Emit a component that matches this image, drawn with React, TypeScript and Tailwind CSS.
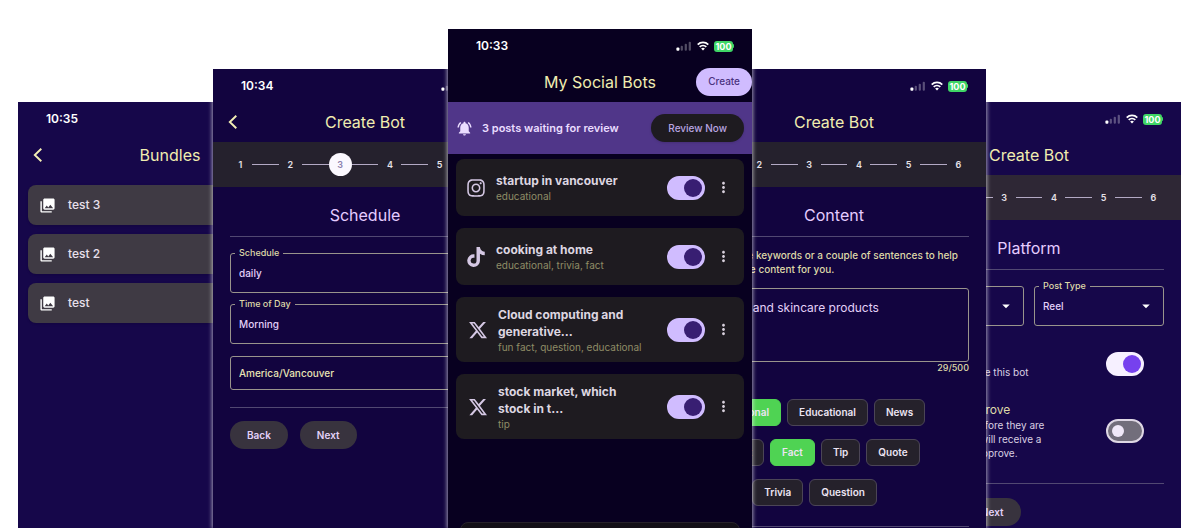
import type { ReactNode } from "react"
import { FaInstagram, FaTiktok, FaXTwitter } from "react-icons/fa6"
import { MdArrowDropDown, MdMoreVert, MdNotificationsActive, MdPhotoLibrary } from "react-icons/md"

function StatusIcons(){
    return(
        <div className="flex items-center gap-[5px]">
            <svg width="16" height="10" viewBox="0 0 16 10">
                <rect x="0.4" y="6.4" width="3" height="3.4" rx="1" fill="#fff"/>
                <rect x="4.7" y="4.8" width="2.2" height="5" rx="1" fill="#fff" opacity=".3"/>
                <rect x="8.7" y="2.8" width="2.2" height="7" rx="1" fill="#fff" opacity=".3"/>
                <rect x="12.7" y="0.8" width="2.2" height="9" rx="1" fill="#fff" opacity=".3"/>
            </svg>
            <svg width="12" height="10" viewBox="0 0 12 10" fill="none" stroke="#fff" strokeWidth="1.8">
                <path d="M0.7 3.6a7.6 7.6 0 0 1 10.6 0"/>
                <path d="M2.7 5.9a4.8 4.8 0 0 1 6.6 0"/>
                <path d="M6 9.6 4.1 7.6a2.8 2.8 0 0 1 3.8 0z" fill="#fff" stroke="none"/>
            </svg>
            <div className="flex items-center">
                <span className="flex h-[11px] w-[19px] items-center justify-center rounded-[3px] bg-[#3fd666] text-[9px] font-bold leading-none text-white">100</span>
                <span className="h-1 w-px rounded-r bg-[#3fd666]"/>
            </div>
        </div>
    )
}

type PhoneProps = {
    time: string
    title: string
    className: string
    back?: boolean
    action?: ReactNode
    children: ReactNode
}

function Phone({ time, title, className, back, action, children }: PhoneProps){
    return(
        <section className={"flex w-[304px] shrink-0 flex-col " + className}>
            <div className="flex h-[34px] shrink-0 items-center justify-between pl-7 pr-[18px]">
                <span className="text-[12px] font-semibold text-white">{time}</span>
                <StatusIcons />
            </div>
            <header className="grid h-[39px] shrink-0 grid-cols-[1fr_auto_1fr] items-center pb-0.5">
                <div className="pl-3">
                    {back && (
                        <button type="button" aria-label="Back" className="block text-[#f3efb4]">
                            <svg width="16" height="16" viewBox="0 0 16 16" fill="none" stroke="currentColor" strokeWidth="1.9">
                                <path d="M11.3 1.7 4.8 8l6.5 6.3"/>
                            </svg>
                        </button>
                    )}
                </div>
                <h1 className="text-[16px] leading-5 text-[#f0edb0]">{title}</h1>
                <div className="justify-self-end">{action}</div>
            </header>
            {children}
        </section>
    )
}

function Stepper({ current, className }: { current?: number, className: string }){
    return(
        <ol className={"flex h-[45px] shrink-0 items-center px-4 text-[9px] font-semibold text-[#e6e1e9] " + className}>
            {[1,2,3,4,5,6].map((step) => (
                <li key={step} className={step > 1 ? "flex flex-1 items-center" : "flex items-center"}>
                    {step > 1 && <span className="h-px flex-1 bg-[#b3a9c4]"/>}
                    <span className={"flex size-[23px] items-center justify-center rounded-full " + (step === current ? "bg-[#fbf8ff] text-[#8c7fae]" : "")}>{step}</span>
                </li>
            ))}
        </ol>
    )
}

function SectionTitle({ children }: { children: ReactNode }){
    return <h2 className="flex h-[50px] shrink-0 items-center justify-center border-b border-[#514872] pt-1.5 text-[16px] text-[#e5ccff]">{children}</h2>
}

function SelectField({ id, label, value, arrow }: { id: string, label: string, value: string, arrow?: boolean }){
    return(
        <fieldset className="min-w-0 flex-1 rounded-[3px] border border-[#99948c] pb-[5px]">
            <legend className="ml-1 px-1 text-[9px] font-medium leading-3 text-[#ded9a8]"><label htmlFor={id}>{label}</label></legend>
            <div className="flex h-7 items-center px-2">
                <select id={id} className="min-w-0 flex-1 appearance-none text-[10px] font-medium text-[#e3d0f8]">
                    <option>{value}</option>
                </select>
                {arrow && <MdArrowDropDown size={18} className="text-white"/>}
            </div>
        </fieldset>
    )
}

function PillButton({ children }: { children: ReactNode }){
    return <button type="button" className="h-7 rounded-full bg-[#38333e] px-[17px] text-[10px] font-semibold text-[#e3d0f8]">{children}</button>
}

function Switch({ label, on, className }: { label: string, on: boolean, className: string }){
    return(
        <input
            type="checkbox"
            role="switch"
            aria-label={label}
            defaultChecked={on}
            className={"flex h-6 w-[38px] shrink-0 appearance-none items-center rounded-full border-2 border-[#ded7e4] bg-[#726e7b] px-1 before:size-3 before:rounded-full before:bg-[#f0e8f8] before:content-[''] checked:justify-end checked:px-px checked:before:size-[18px] " + className}
        />
    )
}

const bots = [
    { icon: <FaInstagram size={20}/>, name: "startup in vancouver", tags: "educational", wide: false },
    { icon: <FaTiktok size={20}/>, name: "cooking at home", tags: "educational, trivia, fact", wide: false },
    { icon: <FaXTwitter size={20}/>, name: "Cloud computing and generative...", tags: "fun fact, question, educational", wide: true },
    { icon: <FaXTwitter size={20}/>, name: "stock market, which stock in t...", tags: "tip", wide: true },
]

const chips = [
    { name: "Promotional", on: true },
    { name: "Educational", on: false },
    { name: "News", on: false },
    { name: "Fun Fact", on: false },
    { name: "Fact", on: true },
    { name: "Tip", on: false },
    { name: "Quote", on: false },
    { name: "Joke", on: false },
    { name: "Trivia", on: false },
    { name: "Question", on: false },
]

function Bundles(){
    return(
        <Phone time="10:35" title="Bundles" back className="mt-[102px] bg-[#16074a]">
            <ul className="flex flex-col gap-[9px] px-[10px] pt-[10px]">
                {["test 3", "test 2", "test"].map((name) => (
                    <li key={name} className="flex h-10 items-center gap-3 rounded-lg bg-[#3f3a44] pl-[11px] text-[12px] font-medium text-[#e8e0ec] shadow">
                        <MdPhotoLibrary size={17} className="text-white"/>
                        {name}
                    </li>
                ))}
            </ul>
        </Phone>
    )
}

function Schedule(){
    return(
        <Phone time="10:34" title="Create Bot" back className="relative z-10 -ml-[109px] mt-[69px] bg-[#12043f] shadow-[0_0_4px_1px_rgba(255,255,255,0.6)]">
            <Stepper current={3} className="bg-[#25212d]"/>
            <div className="flex flex-col px-[17px]">
                <SectionTitle>Schedule</SectionTitle>
                <div className="flex flex-col gap-[5px] pt-[10px]">
                    <SelectField id="schedule" label="Schedule" value="daily"/>
                    <SelectField id="time" label="Time of Day" value="Morning"/>
                </div>
                <input aria-label="Time zone" defaultValue="America/Vancouver" className="mt-3 h-[34px] rounded-[3px] border border-[#99948c] px-2 text-[10px] font-medium text-[#e8e3b4]"/>
                <div className="mt-[17px] flex gap-3 border-t border-[#514872] pt-[13px]">
                    <PillButton>Back</PillButton>
                    <PillButton>Next</PillButton>
                </div>
            </div>
        </Phone>
    )
}

function SocialBots(){
    return(
        <Phone
            time="10:33"
            title="My Social Bots"
            className="relative z-20 -ml-[69px] mt-[29px] bg-[#080020] shadow-[0_0_4px_1px_rgba(255,255,255,0.6)]"
            action={<button type="button" className="h-7 rounded-full bg-[#d0bcff] px-3 text-[10px] font-medium text-[#4a3380]">Create</button>}
        >
            <div className="flex h-[52px] shrink-0 items-center bg-[#503689] px-2 text-[#eaddff]">
                <MdNotificationsActive size={17}/>
                <p className="flex-1 pl-[9px] text-[11px] font-semibold">3 posts waiting for review</p>
                <button type="button" className="h-7 rounded-full bg-[#1e1b20] px-[17px] text-[10px] font-medium text-[#b9a5e0] shadow">Review Now</button>
            </div>
            <ul className="flex flex-col gap-3 px-2 pt-[5px]">
                {bots.map((bot) => (
                    <li key={bot.name} className={"flex items-center gap-[10px] rounded-lg bg-[#1e1b20] pr-3 " + (bot.wide ? "h-[65px] pl-3" : "h-[57px] pl-[10px]")}>
                        <span className="text-[#d5c8e4]">{bot.icon}</span>
                        <div className="min-w-0 flex-1">
                            <h3 className="max-w-[136px] text-[12px] font-bold leading-[17px] text-[#ddd6e0]">{bot.name}</h3>
                            <p className="whitespace-nowrap text-[10px] leading-[14px] text-[#8f8c66]">{bot.tags}</p>
                        </div>
                        <Switch label={bot.name} on className="checked:border-[#d0bcff] checked:bg-[#d0bcff] checked:before:bg-[#381e72]"/>
                        <button type="button" aria-label="More" className="text-[#d8d0dc]"><MdMoreVert size={17}/></button>
                    </li>
                ))}
            </ul>
            <div className="mx-3 mt-[83px] h-12 shrink-0 rounded-lg border border-[#26222a] bg-[#131017]"/>
        </Phone>
    )
}

function Content(){
    return(
        <Phone time="10:34" title="Create Bot" back className="relative z-10 -ml-[70px] mt-[69px] bg-[#12043f] shadow-[0_0_4px_1px_rgba(255,255,255,0.6)]">
            <Stepper current={1} className="bg-[#25212d]"/>
            <div className="flex flex-col px-[17px]">
                <SectionTitle>Content</SectionTitle>
                <p className="whitespace-nowrap pt-[11px] text-[10px] font-medium leading-[14px] text-[#ded9a8]">Provide the keywords or a couple of sentences to help<br/>us generate content for you.</p>
                <textarea aria-label="Content" defaultValue="clothes and skincare products" className="mt-3 h-[74px] resize-none rounded-[3px] border border-[#99948c] px-2 py-[11px] text-[12px] leading-4 text-[#e3d0f8]"/>
                <p className="text-right text-[9px] font-medium leading-3 text-[#ded9a8]">29/500</p>
                <div className="flex flex-wrap gap-x-[6px] gap-y-[13px] pt-[25px]">
                    {chips.map((chip) => (
                        <button key={chip.name} type="button" className={"h-[27px] rounded-md border px-[11px] text-[10px] font-semibold text-[#ece4f2] " + (chip.on ? "border-[#4fd353] bg-[#4fd353]" : "border-[#4b4556] bg-[#25212b]")}>{chip.name}</button>
                    ))}
                </div>
                <hr className="mt-5 border-[#514872]"/>
            </div>
        </Phone>
    )
}

function Platform(){
    return(
        <Phone time="10:35" title="Create Bot" back className="-ml-[109px] mt-[102px] bg-[#16074a]">
            <Stepper current={2} className="bg-[#2e2735]"/>
            <div className="flex flex-col px-[17px]">
                <SectionTitle>Platform</SectionTitle>
                <div className="flex gap-[10px] pt-[10px]">
                    <SelectField id="platform" label="Platform" value="Instagram" arrow/>
                    <SelectField id="post-type" label="Post Type" value="Reel" arrow/>
                </div>
                <div className="mt-[23px] flex items-center justify-between pr-5">
                    <div className="text-[10px] leading-[14px] text-[#d9cfe2]">
                        <h3 className="text-[12px] leading-4 text-[#ded9a8]">Active</h3>
                        <p>Enable or deactivate this bot</p>
                    </div>
                    <Switch label="Active" on className="checked:border-[#f6f0ff] checked:bg-[#f6f0ff] checked:before:bg-[#7641ee]"/>
                </div>
                <div className="mt-[23px] flex items-center justify-between pr-5">
                    <div className="text-[10px] leading-[14px] text-[#d9cfe2]">
                        <h3 className="text-[12px] leading-4 text-[#ded9a8]">Review and Approve</h3>
                        <p>Review all posts before they are<br/>published, so you will receive a<br/>notification, then approve.</p>
                    </div>
                    <Switch label="Review and Approve" on={false} className=""/>
                </div>
                <div className="mt-[23px] flex gap-3 border-t border-[#514872] pt-[14px]">
                    <PillButton>Back</PillButton>
                    <PillButton>Next</PillButton>
                </div>
            </div>
        </Phone>
    )
}

export default function App(){
    return(
        <main className="flex h-screen justify-center overflow-hidden bg-white pr-px font-[Inter,sans-serif]">
            <Bundles />
            <Schedule />
            <SocialBots />
            <Content />
            <Platform />
        </main>
    )
}
